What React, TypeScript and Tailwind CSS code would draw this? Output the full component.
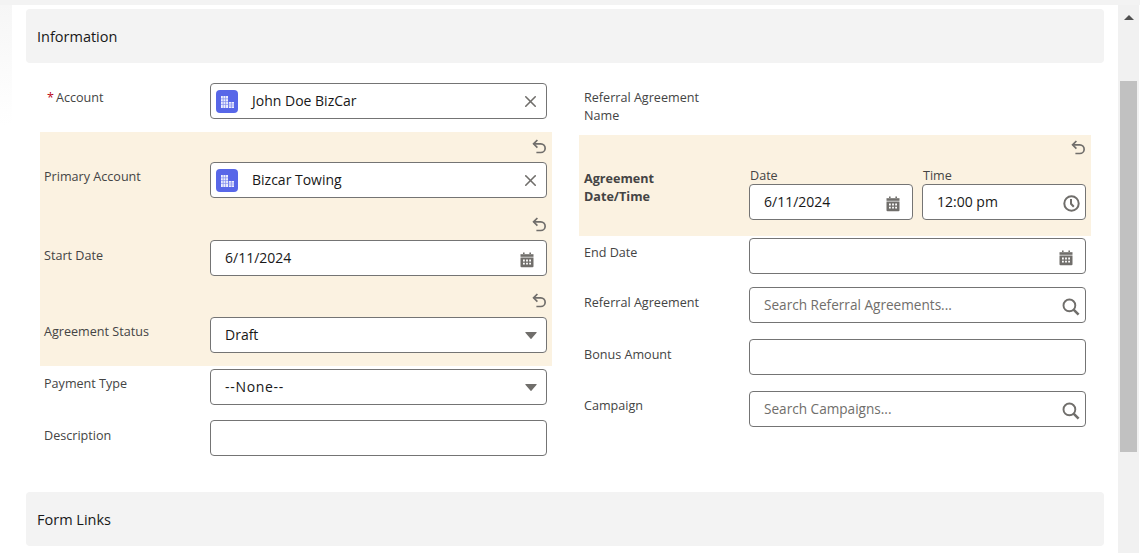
import type { ReactNode } from "react";
import { X } from "lucide-react";

function AccountIcon() {
  return (
    <span className="w-[22px] h-[23px] mt-[1px] shrink-0 rounded-[4px] bg-[#5867e8] flex items-center justify-center">
      <svg width="14" height="14" viewBox="0 0 14 14" fill="none">
        <path d="M1 1h7v12H1z" fill="#eef0fd" />
        <path d="M3.2 1v12M5.6 1v12M1 3.8h7M1 6.6h7M1 9.4h7" stroke="#7f8bec" strokeWidth="0.7" />
        <path d="M8.8 7H14V13H8.8z" fill="#eef0fd" />
        <path d="M8.8 9h5.2M8.8 11h5.2M11.4 7v6" stroke="#7f8bec" strokeWidth="0.7" />
      </svg>
    </span>
  );
}

function CalendarIcon() {
  return (
    <svg width="14" height="16" viewBox="0 0 14 16" fill="none" className="shrink-0 mt-[4px]">
      <path d="M3 0.5h1.6v1.6H3zM9.4 0.5H11v1.6H9.4z" fill="#706e6b" />
      <path d="M0.5 2.2h13v2.6H0.5z" fill="#706e6b" />
      <path d="M0.5 5.6h13v8.6a1 1 0 0 1-1 1h-11a1 1 0 0 1-1-1z" fill="#706e6b" />
      <path d="M3 7.6h1.8v1.8H3zM6.1 7.6h1.8v1.8H6.1zM9.2 7.6H11v1.8H9.2zM3 10.8h1.8v1.8H3zM6.1 10.8h1.8v1.8H6.1zM9.2 10.8H11v1.8H9.2z" fill="#fff" />
    </svg>
  );
}

function ClockIcon() {
  return (
    <svg width="17" height="17" viewBox="0 0 17 17" fill="none" className="shrink-0 mt-[2px]">
      <circle cx="8.5" cy="8.5" r="7.2" stroke="#706e6b" strokeWidth="2" />
      <path d="M8 4v4.8l2.8 3" stroke="#706e6b" strokeWidth="2" />
    </svg>
  );
}

function SearchIcon() {
  return (
    <svg width="18" height="18" viewBox="0 0 18 18" fill="none" className="shrink-0 mt-[4px]">
      <circle cx="7.4" cy="7.4" r="5.9" stroke="#706e6b" strokeWidth="1.9" />
      <path d="M11.6 11.6 16.6 16.6" stroke="#706e6b" strokeWidth="2.6" />
    </svg>
  );
}

function Caret() {
  return (
    <svg width="12" height="7" viewBox="0 0 12 7" className="shrink-0 mt-[1px]">
      <path d="M.8 0h10.4a.5.5 0 0 1 .4.8L6.4 6.7a.5.5 0 0 1-.8 0L.4.8A.5.5 0 0 1 .8 0z" fill="#706e6b" />
    </svg>
  );
}

function Undo({ className }: { className: string }) {
  return (
    <div className={`flex justify-end pr-[6px] ${className}`}>
      <svg width="14" height="15" viewBox="0 0 14 15" fill="none">
        <path d="M5.4 1 1.6 4.8l3.8 3.8" stroke="#706e6b" strokeWidth="1.7" />
        <path d="M1.6 4.8h7.2a4.2 4.2 0 0 1 0 8.7H4.4" stroke="#706e6b" strokeWidth="1.7" />
      </svg>
    </div>
  );
}

function Field({ children, className = "" }: { children?: ReactNode; className?: string }) {
  return (
    <div className={`h-[36px] rounded-[4px] border border-[#747474] bg-white flex items-center text-[14px] text-[#181818] ${className}`}>
      {children}
    </div>
  );
}

function Row({
  label,
  children,
  className = "",
  labelTop = "pt-[6px]",
  labelLeft = "pl-[4px]",
}: {
  label: ReactNode;
  children: ReactNode;
  className?: string;
  labelTop?: string;
  labelLeft?: string;
}) {
  return (
    <div className={`flex ${className}`}>
      <div className={`w-[170px] shrink-0 text-[12.6px] leading-[18px] text-[#444444] ${labelTop} ${labelLeft}`}>{label}</div>
      <div className="w-[337px]">{children}</div>
    </div>
  );
}

function LookupField({ name }: { name: string }) {
  return (
    <Field className="pl-[5px] pr-[6px]">
      <AccountIcon />
      <span className="ml-[14px] flex-1 mb-[2px]">{name}</span>
      <X size={19} strokeWidth={2} color="#706e6b" className="mt-[1px]" />
    </Field>
  );
}

function DateField({ value = "", className = "" }: { value?: string; className?: string }) {
  return (
    <Field className={`pl-[14px] pr-[12px] justify-between ${className}`}>
      <span className="mb-[2px]">{value}</span>
      <CalendarIcon />
    </Field>
  );
}

function SelectField({ value, textClass = "" }: { value: string; textClass?: string }) {
  return (
    <Field className="pl-[14px] pr-[9px] justify-between">
      <span className={`mb-[2px] ${textClass}`}>{value}</span>
      <Caret />
    </Field>
  );
}

function SearchField({ placeholder }: { placeholder: string }) {
  return (
    <Field className="pl-[14px] pr-[5px] justify-between">
      <span className="text-[13.6px] mt-[1px] text-[#706e6b]">{placeholder}</span>
      <SearchIcon />
    </Field>
  );
}

function SectionHeader({ title, className = "" }: { title: string; className?: string }) {
  return (
    <div className={`h-[54px] ml-[14px] w-[1078px] pt-[2px] rounded-[4px] bg-[#f3f3f3] flex items-center pl-[11px] text-[14.5px] text-[#181818] ${className}`}>
      {title}
    </div>
  );
}

export default function App() {
  return (
    <div className="w-[1140px] h-[553px] overflow-hidden bg-white font-['Open_Sans',sans-serif] flex flex-col">
      <div className="h-[5px] bg-[#f3f3f3] shrink-0" />
      <div className="flex flex-1 min-h-0">
        <div className="w-[12px] h-[120px] shrink-0 bg-gradient-to-b from-[#f6f6f6] to-white" />
        <main className="w-[1106px] shrink-0 rounded-tl-[6px] bg-white pt-[4px]">
          <SectionHeader title="Information" />

          <div className="flex mt-[20px] ml-[28px]">
            {/* left column */}
            <div className="w-[512px]">
              <Row
                label={
                  <>
                    <span className="text-[#ba0517] mr-[2px] ml-[3px]">*</span>Account
                  </>
                }
              >
                <LookupField name="John Doe BizCar" />
              </Row>

              <div className="mt-[13px] bg-[#fbf2e1] pb-[13px]">
                <Undo className="h-[30px] pt-[7px]" />
                <Row label="Primary Account">
                  <LookupField name="Bizcar Towing" />
                </Row>
                <Undo className="h-[42px] pt-[19px]" />
                <Row label="Start Date" labelTop="pt-[7px]">
                  <DateField value="6/11/2024" />
                </Row>
                <Undo className="h-[41px] pt-[17px]" />
                <Row label="Agreement Status">
                  <SelectField value="Draft" />
                </Row>
              </div>

              <Row label="Payment Type" className="mt-[3px]">
                <SelectField value="--None--" textClass="tracking-[0.7px]" />
              </Row>
              <Row label="Description" className="mt-[15px]" labelTop="pt-[7px]">
                <Field />
              </Row>
            </div>

            {/* right column */}
            <div className="w-[512px] ml-[27px]">
              <div className="pt-[6px] pl-[5px] h-[52px] w-[140px] text-[12.6px] leading-[18px] text-[#444444]">
                Referral Agreement Name
              </div>

              <div className="bg-[#fbf2e1] h-[101px]">
                <Undo className="h-[30px] pt-[5px]" />
                <div className="flex">
                  <div className="w-[170px] pl-[5px] pt-[5px] text-[12.6px] leading-[18px] font-bold text-[#444444]">
                    Agreement
                    <br />
                    Date/Time
                  </div>
                  <div className="w-[337px] flex gap-[9px]">
                    <div className="w-[164px]">
                      <div className="h-[19px] pt-[2px] pl-[1px] text-[12.6px] leading-[18px] text-[#444444]">Date</div>
                      <DateField value="6/11/2024" />
                    </div>
                    <div className="w-[164px]">
                      <div className="h-[19px] pt-[2px] pl-[1px] text-[12.6px] leading-[18px] text-[#444444]">Time</div>
                      <Field className="pl-[14px] pr-[5px] justify-between">
                        <span className="mb-[2px]">12:00 pm</span>
                        <ClockIcon />
                      </Field>
                    </div>
                  </div>
                </div>
              </div>

              <Row label="End Date" className="mt-[2px]" labelLeft="pl-[5px]">
                <DateField />
              </Row>
              <Row label="Referral Agreement" className="mt-[13px]" labelTop="pt-[7px]" labelLeft="pl-[5px]">
                <SearchField placeholder="Search Referral Agreements..." />
              </Row>
              <Row label="Bonus Amount" className="mt-[16px]" labelTop="pt-[7px]" labelLeft="pl-[5px]">
                <Field />
              </Row>
              <Row label="Campaign" className="mt-[16px]" labelLeft="pl-[5px]">
                <SearchField placeholder="Search Campaigns..." />
              </Row>
            </div>
          </div>

          <SectionHeader title="Form Links" className="mt-[36px]" />
        </main>

        {/* scrollbar */}
        <div className="w-[21px] shrink-0 bg-[#f1f1f1] pl-[2px] pr-[2px]">
          <div className="h-[76px] flex justify-center pt-[10px]">
            <svg width="10" height="5" viewBox="0 0 10 5">
              <path d="M5 0l5 5H0z" fill="#505050" />
            </svg>
          </div>
          <div className="h-[371px] bg-[#c1c1c1]" />
        </div>
      </div>
    </div>
  );
}
